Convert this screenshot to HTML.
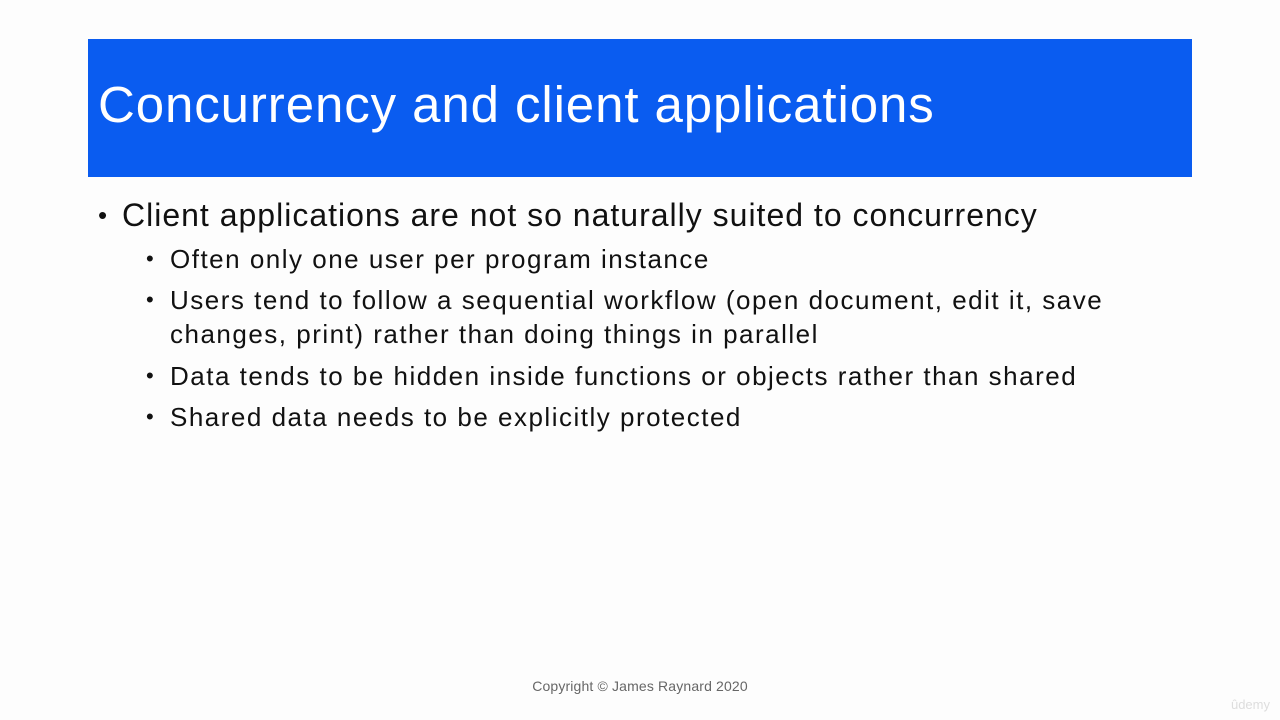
<!DOCTYPE html>
<html><head><meta charset="utf-8"><style>
html,body{margin:0;padding:0;width:1280px;height:720px;background:#fdfdfd;overflow:hidden;font-family:"Liberation Sans",sans-serif;}
.band{position:absolute;left:88px;top:39px;width:1104px;height:138px;background:#0a5cf0;}
.title{position:absolute;left:98px;top:75px;font-size:51px;color:#fff;white-space:nowrap;letter-spacing:0.9px;}
.t{position:absolute;white-space:nowrap;color:#111;}
.l1{font-size:32px;left:122px;letter-spacing:1.0px;}
.l2{font-size:26px;left:170px;letter-spacing:1.5px;}
.b{position:absolute;color:#111;}
.copy{position:absolute;top:678px;left:0;width:1280px;text-align:center;font-size:14px;color:#666;letter-spacing:0.15px;}
</style></head><body>
<div class="band"></div>
<div class="title">Concurrency and client applications</div>
<div class="b" style="left:98px;top:200px;font-size:26px">•</div>
<div class="t l1" style="top:197px">Client applications are not so naturally suited to concurrency</div>
<div class="b" style="left:146px;top:246px;font-size:22px">•</div>
<div class="t l2" style="top:244px">Often only one user per program instance</div>
<div class="b" style="left:146px;top:287px;font-size:22px">•</div>
<div class="t l2" style="top:285px">Users tend to follow a sequential workflow (open document, edit it, save</div>
<div class="t l2" style="top:319px">changes, print) rather than doing things in parallel</div>
<div class="b" style="left:146px;top:363px;font-size:22px">•</div>
<div class="t l2" style="top:361px">Data tends to be hidden inside functions or objects rather than shared</div>
<div class="b" style="left:146px;top:404px;font-size:22px">•</div>
<div class="t l2" style="top:402px">Shared data needs to be explicitly protected</div>
<div class="copy">Copyright © James Raynard 2020</div>
<div style="position:absolute;right:10px;top:697px;font-size:13px;color:#ddd">ûdemy</div>
</body></html>
